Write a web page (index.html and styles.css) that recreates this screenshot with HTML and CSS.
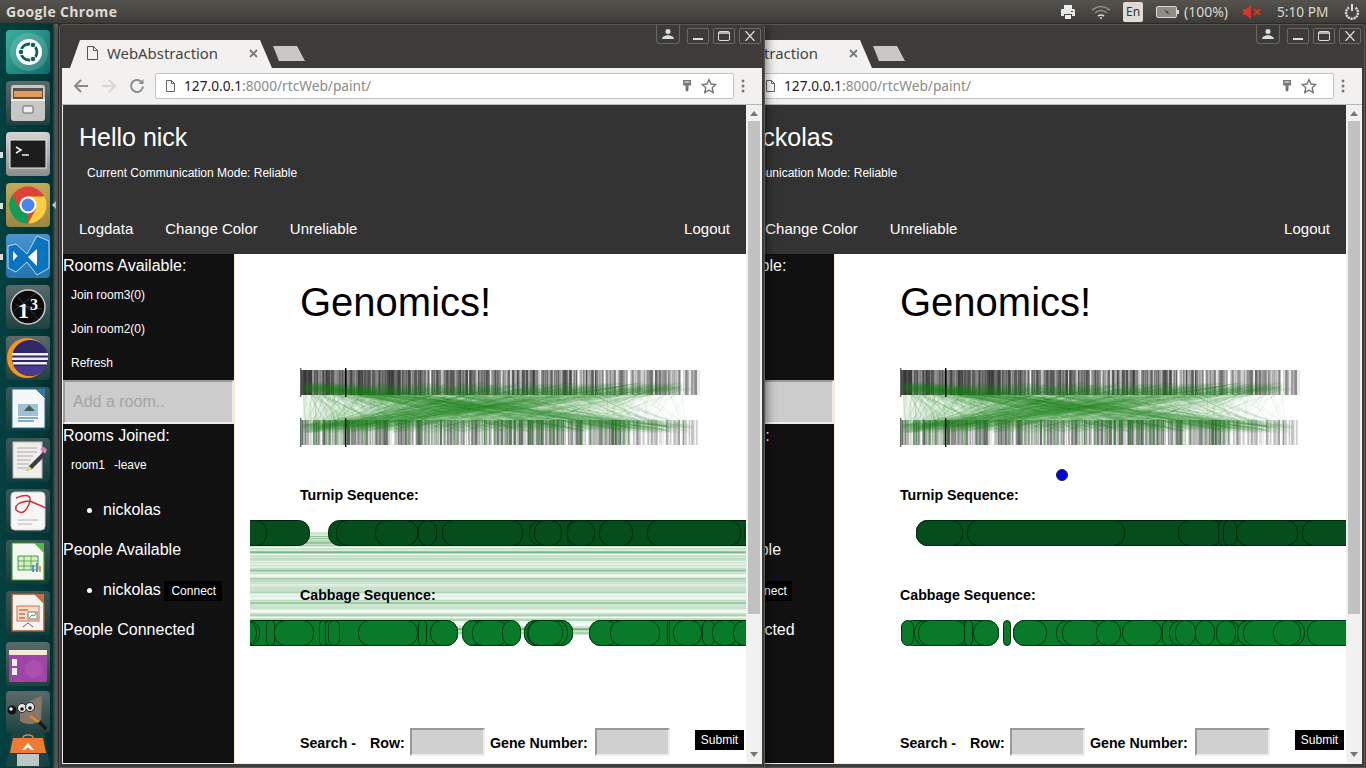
FILE: index.html
```html
<!DOCTYPE html>
<html lang="en">
<head>
<meta charset="utf-8">
<title>WebAbstraction</title>
<link rel="stylesheet" href="styles.css">
</head>
<body>
<div class="desktop">
  <header class="panel">
    <span class="panel-title">Google Chrome</span>
    <svg class="st st-printer" viewBox="0 0 16 16"><path d="M4 1h8v4H4z" fill="#eee"/><path d="M1 6q0-1 1-1h12q1 0 1 1v6h-3v-2H4v2H1z" fill="#e6e6e3"/><path d="M5 11h6v4H5z" fill="#eee"/><path d="M11 7h2v1h-2z" fill="#444"/></svg>
    <svg class="st st-wifi" viewBox="0 0 20 16" fill="none" stroke="#8f8e89" stroke-width="1.6"><path d="M1 6q9-7 18 0"/><path d="M4 9q6-5 12 0"/><path d="M7 12q3-2 6 0" stroke="#ddd"/><circle cx="10" cy="14" r="1" fill="#ddd" stroke="none"/></svg>
    <span class="st-lang">En</span>
    <svg class="st st-batt" viewBox="0 0 23 14"><rect x=".5" y="1.5" width="20" height="11" rx="1.5" fill="#8d8c87" stroke="#d8d8d4"/><path d="M21 5h2v4h-2z" fill="#d8d8d4"/><path d="M7 4l6 3-2 0 4 3-6-3 2 0z" fill="#333"/></svg>
    <span class="st-pct">(100%)</span>
    <svg class="st st-vol" viewBox="0 0 20 14"><path d="M1 4h3l5-4v14l-5-4H1z" fill="#d8352a"/><path d="M12 4l6 6M18 4l-6 6" stroke="#d8352a" stroke-width="2"/></svg>
    <span class="st-time">5:10 PM</span>
    <svg class="st st-gear" viewBox="0 0 16 16" fill="none" stroke="#ddd"><path d="M5 3.500A6 6 0 1 0 11 3.500" stroke-width="2.400" stroke-dasharray="2 .8"/><path d="M8 0v7" stroke-width="2"/></svg>
  </header>

  <nav class="launcher">
    <div class="tile tile-ubuntu"><svg viewBox="0 0 44 44"><circle cx="23" cy="22" r="19" fill="#fff" opacity=".16"/><circle cx="23" cy="22" r="13" fill="#fff"/><circle cx="23" cy="22" r="8" fill="none" stroke="#0f5e5c" stroke-width="2.800"/><circle cx="15" cy="22" r="2.800" fill="#0f5e5c" stroke="#fff"/><circle cx="27" cy="15" r="2.800" fill="#0f5e5c" stroke="#fff"/><circle cx="27" cy="29" r="2.800" fill="#0f5e5c" stroke="#fff"/></svg></div>
    <div class="tile tile-glass"><svg viewBox="0 0 44 44"><rect x="5" y="4" width="34" height="36" rx="3" fill="#c6c6c4"/><rect x="7" y="7" width="30" height="11" fill="#5c5148"/><rect x="8" y="10" width="28" height="6" fill="#e69a55"/><rect x="5" y="18" width="34" height="2" fill="#eee"/><rect x="17" y="25" width="10" height="7" rx="1" fill="#eee" stroke="#666"/></svg></div>
    <div class="tile tile-gray"><i class="pip"></i><svg viewBox="0 0 44 44"><rect x="4" y="8" width="36" height="28" fill="#1d1d1d" stroke="#eee"/><path d="M10 15l5 3-5 3" fill="none" stroke="#eee" stroke-width="1.600"/><path d="M16 23h7" stroke="#eee" stroke-width="1.500"/></svg></div>
    <div class="tile tile-gold"><i class="pip"></i><i class="arrow"></i><svg viewBox="0 0 44 44"><circle cx="22" cy="22" r="18.500" fill="#db4437"/><path d="M22 22L5.500 30.500A18.500 18.500 0 0 0 22 40.500z" fill="#0f9d58"/><path d="M22 13.500H38.500A18.500 18.500 0 0 1 22 40.500L30 26z" fill="#ffcd40"/><path d="M6 12.500L14 26 5.500 30.500A18.500 18.500 0 0 1 6 12.500z" fill="#0f9d58"/><circle cx="22" cy="22" r="8.500" fill="#fff"/><circle cx="22" cy="22" r="6.500" fill="#4a84e8"/></svg></div>
    <div class="tile tile-blue"><i class="pip"></i><svg viewBox="0 0 44 44"><path d="M2 12l8-2 11 10L31 2l12 5v27l-12 7-10-13-11 10-8-4z" fill="#0a74c0" stroke="#bcdcf2"/><path d="M7 17l4.500 5L7 27zM22 23l9-8v17z" fill="#fff"/></svg></div>
    <div class="tile tile-glass"><svg viewBox="0 0 44 44"><circle cx="22" cy="22" r="17" fill="#0b0b0b" stroke="#c9c9c9" stroke-width="1.500"/><path d="M8 26L30 8M12 12l20 22M10 20l26 4" stroke="#666" stroke-width=".5"/><text class="i3-a" x="12" y="33">1</text><text class="i3-b" x="24" y="25">3</text></svg></div>
    <div class="tile tile-glass"><svg viewBox="0 0 44 44"><circle cx="21" cy="22" r="20" fill="#f2961d"/><circle cx="24" cy="22" r="18" fill="#2f2567"/><path d="M6 17h36v2.500H6zM6 21.500h36v2.500H6zM7 26h34v2.500H7z" fill="#eee"/><path d="M8 30a18 18 0 0 0 32 0z" fill="#473a8f"/></svg></div>
    <div class="tile tile-dark"><svg viewBox="0 0 44 44"><path d="M6 2h24l9 9v30H6z" fill="#f5f7f8" stroke="#1d6aa5"/><path d="M30 2h9v9z" fill="#2f7fb5"/><rect x="12" y="17" width="20" height="12" fill="#9fc0d9"/><path d="M18 24l5-6 6 6z" fill="#4a5f48"/><path d="M12 31h20M12 34h16" stroke="#5a93c0" stroke-width="1.400"/></svg></div>
    <div class="tile tile-dark"><svg viewBox="0 0 44 44"><rect x="7" y="4" width="29" height="36" fill="#f0eeea" stroke="#bbb"/><path d="M11 10h20M11 14h20M11 18h16M11 22h14M11 26h12M11 30h10" stroke="#aaa"/><path d="M20 33l3-5 14-14 3 3-14 14z" fill="#3c3c3c"/><path d="M34 11l4-2 3 3-2 4z" fill="#e37fb4"/><path d="M20 33l3-5 3 3z" fill="#efe07d"/></svg></div>
    <div class="tile tile-dark"><svg viewBox="0 0 44 44"><rect x="5" y="3" width="34" height="38" rx="4" fill="#f6f6f6" stroke="#ccc"/><path d="M10 9q18-7 13 6t-13 6q-2-8 14-9l16 7" fill="none" stroke="#d62d2d" stroke-width="1.400"/><path d="M12 31h20M12 35h14" stroke="#ccc" stroke-width="1.500"/></svg></div>
    <div class="tile tile-dark"><svg viewBox="0 0 44 44"><path d="M6 3h23l9 9v28H6z" fill="#f5f8f2" stroke="#3f9d2f" stroke-width="1.200"/><path d="M29 3h9v9z" fill="#5bb34a"/><path d="M12 16h20v14H12z" fill="#d8efc8" stroke="#46a03a"/><path d="M12 21h20M12 26h20M18 16v14M25 16v14" stroke="#46a03a" stroke-width=".8"/><path d="M26 32v-7h2v7zM30 32v-9h2v9z" fill="#5a8fd0"/><path d="M33 32v-6h2v6z" fill="#e89a4a"/></svg></div>
    <div class="tile tile-dark"><svg viewBox="0 0 44 44"><path d="M6 3h23l9 9v28H6z" fill="#f7f3ef" stroke="#a9532b" stroke-width="1.400"/><path d="M29 3h9v9z" fill="#c76f43"/><rect x="11" y="15" width="22" height="15" fill="#f6ddcc" stroke="#c9724a"/><path d="M13 19h9M13 23h6M13 27h6" stroke="#c9724a" stroke-width="1.600"/><rect x="22" y="21" width="9" height="7" fill="#fff" stroke="#777"/><path d="M23 27l3-3 2 1 2-3" stroke="#4a9a3a" fill="none"/><path d="M17 36l5-4 5 4" stroke="#666" fill="none"/></svg></div>
    <div class="tile tile-glass"><svg viewBox="0 0 44 44"><rect x="3" y="8" width="38" height="32" rx="1.500" fill="#a044a8"/><rect x="3" y="8" width="38" height="5" fill="#f0ecd8"/><rect x="6" y="17" width="5" height="7" fill="#eee"/><rect x="6" y="26" width="5" height="7" fill="#eee"/><circle cx="28" cy="27" r="9" fill="#b35eb6" opacity=".5"/></svg></div>
    <div class="tile tile-glass tile-gimp"><svg viewBox="0 0 44 42"><path d="M14 20q8-12 22-15l-1 24q-12 8-21 1z" fill="#85786a"/><circle cx="6" cy="19" r="4.500" fill="#111"/><circle cx="5" cy="18" r="1.800" fill="#eee"/><circle cx="16" cy="17" r="4.500" fill="#e8e8e8" stroke="#222"/><circle cx="16" cy="18" r="1.800" fill="#111"/><circle cx="24" cy="16" r="4.500" fill="#e8e8e8" stroke="#222"/><circle cx="24" cy="17" r="1.800" fill="#111"/><path d="M24 25l10 7" stroke="#e08a22" stroke-width="2.500"/><path d="M33 31l7 7" stroke="#1a1a1a" stroke-width="3.500"/></svg></div>
    <div class="tile-soft"><svg viewBox="0 0 44 35"><path d="M6 0h32l6 33q-22 3-44 0z" fill="#254a4a" opacity=".7"/><path d="M7 5h30l3 15H4z" fill="#ef7a33"/><path d="M17 5q0-3 5-3t5 3" fill="none" stroke="#ef7a33" stroke-width="1.500"/><path d="M16 17l6-7 6 7h-3l-3-3-3 3z" fill="#fff"/><rect x="11" y="21" width="22" height="12" fill="#ddd" opacity=".85"/></svg></div>
  </nav>

  <section class="window win-b" data-seq="b">
    <div class="titlebar">
      <div class="tab"><svg class="tab-file" viewBox="0 0 11 14" fill="none" stroke="#555"><path d="M.5.5h6l4 4v9H.5zM6.500.5v4h4"/></svg><span class="tab-text">WebAbstraction</span><svg class="tab-close" viewBox="0 0 9 9" stroke="#777" stroke-width="1.800"><path d="M1 1l7 7M8 1L1 8"/></svg></div>
      <div class="newtab"></div>
      <div class="controls">
        <div class="ctl ctl-user"><svg viewBox="0 0 12 10" fill="#ddd"><circle cx="6" cy="2.500" r="2.500"/><path d="M0 10q0-3 6-4 6 1 6 4z"/></svg></div>
        <div class="ctl"><svg viewBox="0 0 12 10" fill="#ddd"><path d="M1 7h10v2H1z"/></svg></div>
        <div class="ctl"><svg viewBox="0 0 12 10" fill="none" stroke="#ddd"><rect x=".5" y=".5" width="11" height="9" rx="1.500"/><path d="M1 2h10" stroke-width="1.500"/></svg></div>
        <div class="ctl"><svg viewBox="0 0 12 10" stroke="#ddd" stroke-width="1.300"><path d="M1.500 0l9 10M10.500 0l-9 10"/></svg></div>
      </div>
    </div>
    <div class="toolbar">
      <svg class="tb-btn" viewBox="0 0 18 18" fill="none" stroke="#8a8a8a" stroke-width="2"><path d="M16 9H3M9 3L3 9l6 6"/></svg>
      <svg class="tb-btn" viewBox="0 0 18 18" fill="none" stroke="#d6d6d6" stroke-width="2"><path d="M2 9h13M9 3l6 6-6 6"/></svg>
      <svg class="tb-btn" viewBox="0 0 18 18" fill="none" stroke="#8a8a8a" stroke-width="2"><path d="M15 9.500A6 6 0 1 1 13 4.500"/><path d="M15.500 2v5h-5z" fill="#8a8a8a" stroke="none"/></svg>
      <div class="omnibox">
        <svg class="omni-file" viewBox="0 0 11 14" fill="none" stroke="#666"><path d="M1.500 1.500h5l3 3v8h-8zM6.500 1.500v3h3"/></svg>
        <span class="url"><span class="url-host">127.0.0.1</span>:8000/rtcWeb/paint/</span>
        <svg class="omni-key" viewBox="0 0 8 12" fill="#777"><path d="M0 0h8v5.500H5.500V10L4 12 2.500 10V5.500H0zM1.500 1.500v1h5v-1z" fill-rule="evenodd"/></svg>
        <svg class="omni-star" viewBox="0 0 16 16" fill="none" stroke="#777" stroke-width="1.400"><path d="M8 1.500l2 4.500 4.800.5-3.600 3.200 1 4.800L8 12.100l-4.200 2.400 1-4.800L1.200 6.500 6 6z"/></svg>
      </div>
      <svg class="tb-menu" viewBox="0 0 4 14" fill="#777"><circle cx="2" cy="2" r="1.500"/><circle cx="2" cy="7" r="1.500"/><circle cx="2" cy="12" r="1.500"/></svg>
    </div>
    <div class="viewport">
      <div class="page">
        <div class="page-head">
          <h2 class="hello">Hello nickolas</h2>
          <p class="mode">Current Communication Mode: Reliable</p>
          <div class="nav"><a>Logdata</a><a>Change Color</a><a>Unreliable</a><a class="logout">Logout</a></div>
        </div>
        <div class="page-body">
          <aside class="side">
            <div class="side-h">Rooms Available:</div>
            <a class="side-link">Join room3(0)</a>
            <a class="side-link">Join room2(0)</a>
            <a class="side-link side-link-last">Refresh</a>
            <input class="room-input" placeholder="Add a room..">
            <div class="side-h">Rooms Joined:</div>
            <div class="joined"><span>room1</span><span>-leave</span></div>
            <ul class="people people-first"><li>nick</li></ul>
            <div class="side-h side-h-gap">People Available</div>
            <ul class="people"><li>nick<button class="connect">Connect</button></li></ul>
            <div class="side-h side-h-gap2">People Connected</div>
          </aside>
          <main class="main">
            <div class="blue-dot"></div>
            <h1 class="title">Genomics!</h1>
            <svg class="chart" viewBox="300 368 400 80"></svg>
            <div class="seq-label seq-label-top">Turnip Sequence:</div>
            <div class="genome"><svg class="genome-svg" viewBox="250 520 496 126"></svg><div class="seq-label seq-label-over">Cabbage Sequence:</div></div>
            <form class="search"><b class="s-search">Search -</b><b class="s-row">Row:</b><input class="s-input"><b class="s-gene">Gene Number:</b><input class="s-input"><button type="button" class="s-submit">Submit</button></form>
          </main>
        </div>
      </div>
      <div class="scroll"><i class="sc-up"></i><i class="sc-thumb"></i><i class="sc-down"></i></div>
    </div>
  </section>

  <section class="window win-a" data-seq="a">
    <div class="titlebar">
      <div class="tab"><svg class="tab-file" viewBox="0 0 11 14" fill="none" stroke="#555"><path d="M.5.5h6l4 4v9H.5zM6.500.5v4h4"/></svg><span class="tab-text">WebAbstraction</span><svg class="tab-close" viewBox="0 0 9 9" stroke="#777" stroke-width="1.800"><path d="M1 1l7 7M8 1L1 8"/></svg></div>
      <div class="newtab"></div>
      <div class="controls">
        <div class="ctl ctl-user"><svg viewBox="0 0 12 10" fill="#ddd"><circle cx="6" cy="2.500" r="2.500"/><path d="M0 10q0-3 6-4 6 1 6 4z"/></svg></div>
        <div class="ctl"><svg viewBox="0 0 12 10" fill="#ddd"><path d="M1 7h10v2H1z"/></svg></div>
        <div class="ctl"><svg viewBox="0 0 12 10" fill="none" stroke="#ddd"><rect x=".5" y=".5" width="11" height="9" rx="1.500"/><path d="M1 2h10" stroke-width="1.500"/></svg></div>
        <div class="ctl"><svg viewBox="0 0 12 10" stroke="#ddd" stroke-width="1.300"><path d="M1.500 0l9 10M10.500 0l-9 10"/></svg></div>
      </div>
    </div>
    <div class="toolbar">
      <svg class="tb-btn" viewBox="0 0 18 18" fill="none" stroke="#8a8a8a" stroke-width="2"><path d="M16 9H3M9 3L3 9l6 6"/></svg>
      <svg class="tb-btn" viewBox="0 0 18 18" fill="none" stroke="#d6d6d6" stroke-width="2"><path d="M2 9h13M9 3l6 6-6 6"/></svg>
      <svg class="tb-btn" viewBox="0 0 18 18" fill="none" stroke="#8a8a8a" stroke-width="2"><path d="M15 9.500A6 6 0 1 1 13 4.500"/><path d="M15.500 2v5h-5z" fill="#8a8a8a" stroke="none"/></svg>
      <div class="omnibox">
        <svg class="omni-file" viewBox="0 0 11 14" fill="none" stroke="#666"><path d="M1.500 1.500h5l3 3v8h-8zM6.500 1.500v3h3"/></svg>
        <span class="url"><span class="url-host">127.0.0.1</span>:8000/rtcWeb/paint/</span>
        <svg class="omni-key" viewBox="0 0 8 12" fill="#777"><path d="M0 0h8v5.500H5.500V10L4 12 2.500 10V5.500H0zM1.500 1.500v1h5v-1z" fill-rule="evenodd"/></svg>
        <svg class="omni-star" viewBox="0 0 16 16" fill="none" stroke="#777" stroke-width="1.400"><path d="M8 1.500l2 4.500 4.800.5-3.600 3.200 1 4.800L8 12.100l-4.200 2.400 1-4.800L1.200 6.500 6 6z"/></svg>
      </div>
      <svg class="tb-menu" viewBox="0 0 4 14" fill="#777"><circle cx="2" cy="2" r="1.500"/><circle cx="2" cy="7" r="1.500"/><circle cx="2" cy="12" r="1.500"/></svg>
    </div>
    <div class="viewport">
      <div class="page">
        <div class="page-head">
          <h2 class="hello">Hello nick</h2>
          <p class="mode">Current Communication Mode: Reliable</p>
          <div class="nav"><a>Logdata</a><a>Change Color</a><a>Unreliable</a><a class="logout">Logout</a></div>
        </div>
        <div class="page-body">
          <aside class="side">
            <div class="side-h">Rooms Available:</div>
            <a class="side-link">Join room3(0)</a>
            <a class="side-link">Join room2(0)</a>
            <a class="side-link side-link-last">Refresh</a>
            <input class="room-input" placeholder="Add a room..">
            <div class="side-h">Rooms Joined:</div>
            <div class="joined"><span>room1</span><span>-leave</span></div>
            <ul class="people people-first"><li>nickolas</li></ul>
            <div class="side-h side-h-gap">People Available</div>
            <ul class="people"><li>nickolas<button class="connect">Connect</button></li></ul>
            <div class="side-h side-h-gap2">People Connected</div>
          </aside>
          <main class="main">
            <h1 class="title">Genomics!</h1>
            <svg class="chart" viewBox="300 368 400 80"></svg>
            <div class="seq-label seq-label-top">Turnip Sequence:</div>
            <div class="genome"><svg class="genome-svg" viewBox="250 520 496 126"></svg><div class="seq-label seq-label-over">Cabbage Sequence:</div></div>
            <form class="search"><b class="s-search">Search -</b><b class="s-row">Row:</b><input class="s-input"><b class="s-gene">Gene Number:</b><input class="s-input"><button type="button" class="s-submit">Submit</button></form>
          </main>
        </div>
      </div>
      <div class="scroll"><i class="sc-up"></i><i class="sc-thumb"></i><i class="sc-down"></i></div>
    </div>
  </section>
</div>
<script src="script.js"></script>
</body>
</html>
```
FILE: styles.css
```css
* { box-sizing: border-box; }
html, body { margin: 0; height: 100%; overflow: hidden; }
body { font-family: "Liberation Sans", Arial, sans-serif; background: #3b3a36; }
.desktop { position: relative; width: 1366px; height: 768px; overflow: hidden; background: #3b3a36; }

/* top panel */
.panel { height: 24px; display: flex; align-items: center; background: linear-gradient(#55534d, #3c3b37); border-bottom: 1px solid #2b2a27; color: #dfdbd2; position: relative; z-index: 5; }
.panel-title { margin-left: 6px; width: 1049px; font: 700 14px "Open Sans", "DejaVu Sans", sans-serif; letter-spacing: .35px; }
.st { flex: none; display: block; }
.st-printer { width: 16px; height: 16px; margin-left: 5px; }
.st-wifi { width: 20px; height: 16px; margin-left: 15px; }
.st-lang { width: 20px; height: 20px; margin-left: 12px; background: #dfdcd6; border-radius: 2px; color: #333; font: 12px/20px "Noto Sans", sans-serif; text-align: center; }
.st-batt { width: 23px; height: 14px; margin-left: 13px; }
.st-pct { margin-left: 5px; font: 14px "Noto Sans", sans-serif; color: #d9d9d3; width: 48px; }
.st-vol { width: 20px; height: 14px; margin-left: 10px; }
.st-time { margin-left: 15px; font: 13.7px "Noto Sans", sans-serif; color: #d9d9d3; width: 56px; white-space: nowrap; }
.st-gear { width: 16px; height: 16px; margin-left: 11px; }

/* launcher */
.launcher { position: absolute; left: 0; top: 24px; bottom: 0; width: 58px; padding: 6px 0 0 6px; display: flex; flex-direction: column; gap: 7px; background: linear-gradient(90deg, #03403f, #023434 90%, #6a6a66 96%); }
.tile { position: relative; flex: none; width: 44px; height: 44px; border-radius: 4px; }
.tile svg { display: block; width: 44px; height: 44px; }
.tile-ubuntu { background: linear-gradient(135deg, #3bb0a0, #0c6d6a); }
.tile-glass { background: linear-gradient(#5b6a69, #1e4241); }
.tile-gray { background: linear-gradient(#d4d4d2, #8c8c8a); }
.tile-gold { background: linear-gradient(#c2aa5a, #9c8740); }
.tile-blue { background: linear-gradient(#4a94cf, #2673ae); }
.tile-dark { background: linear-gradient(#3d5857, #123c3b); }
.tile-gimp { height: 42px; margin-top: -2px; }
.tile-gimp svg { height: 42px; }
.tile-soft { flex: none; width: 44px; height: 35px; margin-top: -7px; }
.tile-soft svg { display: block; width: 44px; height: 35px; }
.pip { position: absolute; left: -6px; top: 20px; width: 3px; height: 6px; background: #ddd; }
.arrow { position: absolute; right: -6px; top: 18px; border: 4px solid transparent; border-right: 4px solid #ddd; border-left: 0; }

/* browser window */
.window { position: absolute; top: 24px; width: 706px; height: 744px; padding: 0 2px; background: #3d3c38; border: 1px solid #5a5954; border-radius: 4px 4px 0 0; display: flex; flex-direction: column; }
.win-a { left: 59px; z-index: 3; box-shadow: 0 0 12px rgba(0,0,0,.65); }
.win-b { left: 659px; z-index: 2; }
.titlebar { flex: none; height: 43px; display: flex; align-items: flex-end; padding-left: 8px; }
.tab { width: 202px; height: 28px; display: flex; align-items: center; padding: 0 14px 2px 17px; background: #f2f1f0; clip-path: polygon(0 100%, 10px 0, 190px 0, 100% 100%); }
.tab-file { width: 11px; height: 14px; margin-right: 9px; flex: none; }
.tab-text { font: 14.9px "Noto Sans", sans-serif; color: #444; white-space: nowrap; }
.tab-close { width: 9px; height: 9px; margin-left: auto; flex: none; }
.newtab { width: 32px; height: 15px; margin: 0 0 7px 1px; background: #c9c7c3; clip-path: polygon(0 0, 24px 0, 100% 100%, 6px 100%); }
.controls { align-self: flex-start; margin-left: auto; margin-right: 1px; display: flex; align-items: flex-start; }
.ctl { width: 22px; height: 16px; margin: 3px 0 0 4px; border: 1px solid #6a6963; border-radius: 2px; display: flex; align-items: center; justify-content: center; }
.ctl svg { width: 12px; height: 10px; display: block; }
.ctl-user { width: 24px; height: 19px; margin: 0 3px 0 0; border-top: 0; border-radius: 0 0 4px 4px; }
.toolbar { flex: none; height: 37px; display: flex; align-items: center; padding-left: 10px; background: #f2f1f0; border-bottom: 1px solid #b8b8b8; }
.tb-btn { width: 18px; height: 18px; margin-right: 10px; flex: none; }
.omnibox { flex: 1; height: 26px; margin-left: -1px; display: flex; align-items: center; padding: 0 16px 1px 9px; background: #fff; border: 1px solid #c4c4c4; border-radius: 2px; }
.omni-file { width: 11px; height: 14px; margin-right: 8px; flex: none; }
.url { font: 13.7px "Noto Sans", sans-serif; color: #8a8a8a; white-space: nowrap; }
.url-host { color: #222; }
.omni-key { width: 8px; height: 12px; margin-left: auto; flex: none; }
.omni-star { width: 16px; height: 16px; margin-left: 10px; flex: none; }
.tb-menu { width: 4px; height: 14px; margin: 0 17px 0 7px; flex: none; }
.viewport { flex: none; height: 659px; display: flex; border-left: 1px solid #eee; border-bottom: 1px solid #eee; }
.page { width: 683px; flex: none; overflow: hidden; display: flex; flex-direction: column; }
.scroll { width: 16px; flex: none; background: #f1f1f1; display: flex; flex-direction: column; align-items: center; padding-top: 6px; }
.sc-up { border: 4px solid transparent; border-bottom: 5px solid #777; border-top: 0; }
.sc-thumb { width: 12px; height: 493px; margin-top: 5px; background: #c1c1c1; }
.sc-down { margin-top: auto; margin-bottom: 6px; border: 4px solid transparent; border-top: 5px solid #777; border-bottom: 0; }

/* page head */
.page-head { flex: none; height: 149px; background: #333; color: #fff; display: flex; flex-direction: column; }
.hello { margin: 18px 0 0 16px; font-size: 25px; line-height: 29px; font-weight: 400; white-space: nowrap; }
.mode { margin: 14px 0 0 24px; font-size: 12px; line-height: 14px; }
.nav { margin-top: 40px; display: flex; gap: 32px; padding: 0 16px; font-size: 15px; line-height: 17px; }
.logout { margin-left: auto; }

/* sidebar */
.page-body { flex: 1; min-height: 0; display: flex; }
.side { flex: none; width: 172px; background: #111; color: #fff; border-right: 1px solid #ffe8d2; display: flex; flex-direction: column; }
.side-h { font-size: 16px; line-height: 18px; white-space: nowrap; margin-top: 3px; }
.side-h-gap { margin-top: 22px; }
.side-h-gap2 { margin-top: 20px; }
.side-link { display: block; margin: 8px 0 0 8px; font-size: 12px; line-height: 26px; }
.side-h + .side-link { margin-top: 7px; }
.side-link-last { margin-bottom: 4px; }
.room-input { width: 171px; height: 44px; flex: none; background: #ccc; border: 2px inset #eee; padding: 0 8px; font: 16px "Liberation Sans", sans-serif; }
.room-input::placeholder { color: #a4a4a4; }
.joined { display: flex; gap: 9px; margin: 13px 0 0 8px; font-size: 12px; line-height: 14px; }
.people { margin: 22px 0 0; padding: 0 0 0 40px; font-size: 16px; line-height: 18px; white-space: nowrap; }
.people li { position: relative; }
.people-first { margin-top: 29px; }
.connect { position: relative; top: -0.5px; margin-left: 3px; height: 20px; width: 58px; padding: 0 0 0 2px; background: #000; color: #fff; border: 0; font: 12px "Liberation Sans", sans-serif; }

/* main */
.main { flex: 1; min-width: 0; position: relative; padding-left: 15px; background: #fff; color: #000; }
.title { margin: 25px 0 0 50px; font-size: 40px; line-height: 46px; font-weight: 400; }
.chart { display: block; width: 400px; height: 80px; margin: 43px 0 0 50px; }
.seq-label { font-size: 14.2px; line-height: 17px; font-weight: 700; white-space: nowrap; }
.seq-label-top { margin: 39px 0 0 50px; }
.genome { position: relative; margin-top: 16px; width: 496px; height: 126px; }
.genome-svg { display: block; width: 496px; height: 126px; }
.seq-label-over { position: absolute; left: 50px; top: 67px; }
.search { display: flex; align-items: center; height: 28px; margin: 82px 2px 0 50px; padding-top: 1px; font-size: 14.2px; white-space: nowrap; }
.s-search { width: 70px; }
.s-row { width: 40px; }
.s-gene { width: 105px; margin-left: 5px; }
.s-input { width: 75px; height: 28px; margin-top: -1px; background: #d0d0d0; border: 2px inset #eee; padding: 0; }
.s-submit { margin: -5px 0 0 auto; width: 49px; height: 20px; padding: 0; background: #000; color: #fff; border: 0; font: 12px "Liberation Sans", sans-serif; }
.blue-dot { position: absolute; left: 221px; top: 215px; width: 12px; height: 12px; border-radius: 50%; background: #0000e6; border: 1px solid #223; }

.i3-a { font: 700 22px "Liberation Serif", serif; fill: #fff; }
.i3-b { font: 700 16px "Liberation Serif", serif; fill: #fff; }
```
FILE: script.js
```js
(function () {
  var NS = 'http://www.w3.org/2000/svg';
  function el(parent, name, attrs) {
    var n = document.createElementNS(NS, name);
    for (var k in attrs) n.setAttribute(k, attrs[k]);
    parent.appendChild(n);
    return n;
  }
  function rng(seed) {
    return function () {
      seed = (seed * 1664525 + 1013904223) >>> 0;
      return seed / 4294967296;
    };
  }

  function drawChart(svg) {
    var r = rng(20170);
    var i, x;
    for (i = 0; i < 1000; i++) {
      x = 300 + 399 * Math.pow(r(), 1.3);
      el(svg, 'rect', { x: x, y: 370, width: r() < .3 ? 2 : 1, height: 25, fill: '#333', opacity: x > 600 ? .2 : .3 });
    }
    for (i = 0; i < 620; i++) {
      x = 300 + 397 * Math.pow(r(), 1.05);
      el(svg, 'rect', { x: x, y: 420, width: r() < .3 ? 2 : 1, height: 25, fill: '#333', opacity: x > 620 ? .15 : .22 });
    }
    for (i = 0; i < 1200; i++) {
      var t = 302 + 390 * Math.pow(r(), 1.5);
      var b = 302 + 392 * Math.pow(r(), 1.4);
      var y1 = 382 + r() * 8, y2 = 433 - r() * 8;
      el(svg, 'line', { x1: t, y1: y1, x2: b, y2: y2, stroke: '#1f8a1f', 'stroke-width': .8, opacity: .085 });
    }
    for (i = 0; i < 120; i++) {
      x = 300 + 330 * r();
      el(svg, 'rect', { x: x, y: 420, width: 1, height: 25, fill: '#1c7a1c', opacity: .35 });
    }
    [[300, '#666'], [345, '#000']].forEach(function (t) {
      el(svg, 'rect', { x: t[0], y: 368, width: 1.4, height: 29, fill: t[1] });
      el(svg, 'rect', { x: t[0], y: 418, width: 1.4, height: 29, fill: t[1] });
    });
  }

  var DATA = {
    a: {
      offset: 0,
      links: true,
      tMain: [[200, 310], [328, 800]],
      tInner: [[200, 267], [336, 418], [375, 418], [418, 437], [442, 523], [529, 562], [534, 562], [567, 582], [567, 595], [599, 633], [647, 741], [744, 800]],
      cMain: [[200, 458], [462, 521], [524, 573], [589, 800]],
      cInner: [[200, 260], [200, 257], [266, 275], [274, 314], [319, 327], [325, 335], [328, 340], [358, 418], [418, 427], [430, 458], [462, 482], [472, 508], [502, 521], [524, 573], [527, 568], [528, 563], [589, 618], [610, 660], [667, 670], [673, 702], [702, 715], [712, 738], [733, 800]]
    },
    b: {
      offset: 600,
      links: false,
      tMain: [[916, 1500]],
      tInner: [[916, 963], [967, 1125], [1178, 1223], [1218, 1229], [1223, 1237], [1236, 1298], [1302, 1500]],
      cMain: [[901, 999], [1003, 1011], [1013, 1500]],
      cInner: [[901, 914], [914, 972], [918, 967], [964, 973], [973, 999], [1013, 1047], [1056, 1101], [1062, 1101], [1096, 1121], [1122, 1162], [1162, 1175], [1169, 1240], [1175, 1196], [1195, 1215], [1216, 1236], [1237, 1273], [1243, 1305], [1273, 1301], [1307, 1500]]
    }
  };

  function bars(svg, list, y, fill, off, stroke) {
    list.forEach(function (s) {
      el(svg, 'rect', { x: s[0] - off + .5, y: y + .5, width: s[1] - s[0] - 1, height: 25, rx: Math.min(11, (s[1] - s[0]) / 2), fill: fill, stroke: stroke, 'stroke-width': 1 });
    });
  }

  function drawGenome(svg, d) {
    var off = d.offset;
    if (d.links) {
      var r = rng(4242);
      for (var i = 0; i < 190; i++) {
        var y = 531 + 103 * r();
        var edge = y < 552 || y > 622;
        el(svg, 'rect', { x: 250, y: y, width: 496, height: 1 + r() * .8, fill: '#1f8a2f', opacity: (edge ? .1 : .03) + r() * .1 });
      }
    }
    bars(svg, d.tMain, 520, '#054d1b', off, '#001f08');
    bars(svg, d.tInner, 520, '#054d1b', off, '#022a0e');
    bars(svg, d.cMain, 620, '#077b2a', off, '#00300f');
    bars(svg, d.cInner, 620, '#077b2a', off, '#023a12');
  }

  document.querySelectorAll('.window').forEach(function (w) {
    drawChart(w.querySelector('.chart'));
    drawGenome(w.querySelector('.genome-svg'), DATA[w.getAttribute('data-seq')]);
  });
})();
```
